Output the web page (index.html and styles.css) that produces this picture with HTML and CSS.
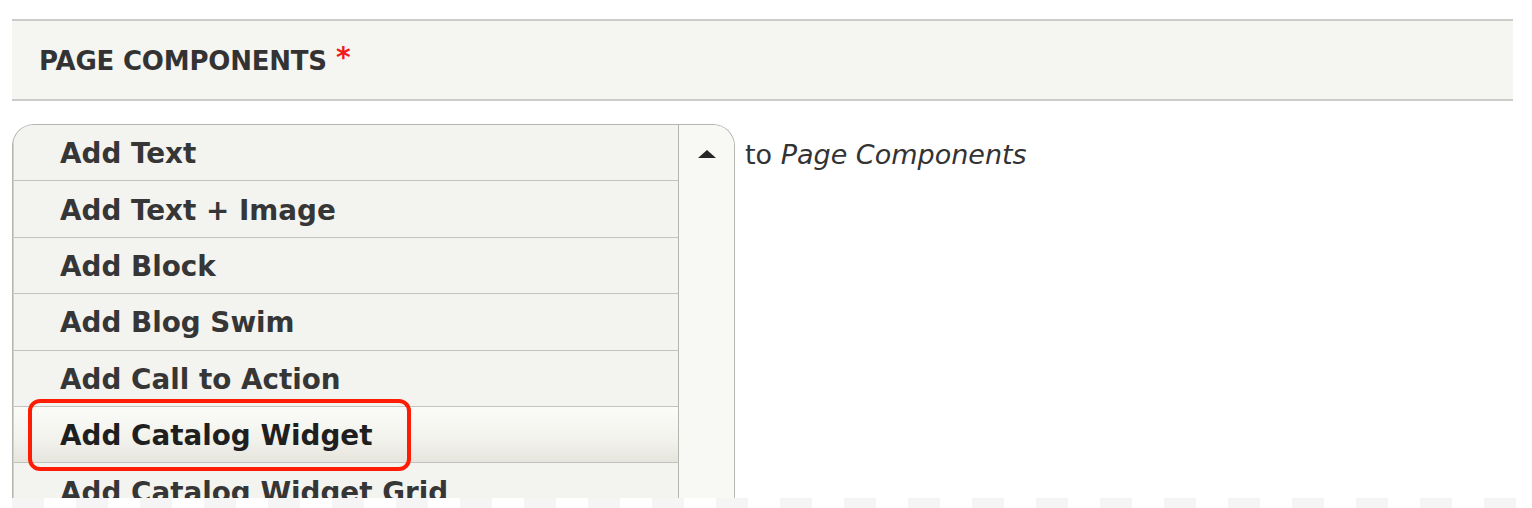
FILE: index.html
```html
<!DOCTYPE html>
<html>
<head>
<meta charset="utf-8">
<link rel="stylesheet" href="styles.css">
</head>
<body>
<div class="page">
  <div class="header">
    <span class="title">PAGE COMPONENTS</span><span class="req">*</span>
  </div>
  <div class="main">
    <div class="listbox">
      <div class="items">
        <div class="item">Add Text</div>
        <div class="item">Add Text + Image</div>
        <div class="item">Add Block</div>
        <div class="item">Add Blog Swim</div>
        <div class="item">Add Call to Action</div>
        <div class="item item-active">Add Catalog Widget<span class="mark"></span></div>
        <div class="item">Add Catalog Widget Grid</div>
      </div>
      <div class="track"><span class="arrow"></span></div>
    </div>
    <div class="to">to <em>Page Components</em></div>
  </div>
</div>
<div class="strip"></div>
</body>
</html>
```
FILE: styles.css
```css
html, body {
  margin: 0;
  padding: 0;
  background: #fff;
}
body {
  font-family: "DejaVu Sans", Verdana, sans-serif;
  color: #333;
}
.page {
  height: 498px;
  overflow: hidden;
  padding-top: 19px;
  box-sizing: border-box;
}
.header {
  margin-left: 12px;
  width: 1501px;
  height: 82px;
  box-sizing: border-box;
  background: #f5f5f1;
  border-top: 2px solid #ccccc8;
  border-bottom: 2px solid #ccccc8;
  display: flex;
  align-items: center;
  padding-left: 27px;
}
.title {
  font-weight: bold;
  font-size: 26px;
  letter-spacing: -0.2px;
  color: #333;
  position: relative;
  top: 1px;
}
.req {
  color: #f21b1b;
  font-weight: bold;
  font-size: 28px;
  margin-left: 9px;
  position: relative;
  top: -3px;
}
.main {
  display: flex;
  align-items: flex-start;
  margin-top: 23px;
  margin-left: 12px;
}
.listbox {
  display: flex;
  width: 721px;
  border: 1px solid #b5b5b1;
  border-bottom: none;
  border-radius: 22px 22px 0 0;
  overflow: hidden;
  height: 400px;
  background: #f3f3ef;
}
.items {
  width: 664px;
  border-right: 1px solid #b5b5b1;
  border-left: 1px solid #d0d0cc;
  flex: none;
}
.item {
  position: relative;
  height: 55.4px;
  border-bottom: 1px solid #c2c2be;
  display: flex;
  align-items: center;
  padding-left: 46px;
  padding-top: 2px;
  box-sizing: border-box;
  height: 56.4px;
  font-size: 27.8px;
  font-weight: bold;
  color: #363636;
  background: #f3f3ef;
}
.item-active {
  color: #1f1f1f;
  background: linear-gradient(#fbfbf8, #f3f3ee 55%, #e6e5dd);
  z-index: 2;
}
.mark {
  position: absolute;
  left: 14px;
  top: -8px;
  width: 375px;
  height: 64px;
  border: 4.5px solid #ff1c05;
  border-radius: 12px;
  z-index: 3;
}
.track {
  flex: 1;
  background: #f8f8f5;
  display: flex;
  justify-content: center;
  padding-top: 25px;
}
.arrow {
  width: 0;
  height: 0;
  border-left: 9px solid transparent;
  border-right: 9px solid transparent;
  border-bottom: 8px solid #262626;
}
.to {
  margin-left: 10px;
  margin-top: 15px;
  font-size: 27px;
  color: #333;
}
.to em {
  font-style: italic;
}
.strip {
  height: 10px;
  background: repeating-linear-gradient(90deg, #fff 0 12px, #f5f5f5 12px 44px, #fff 44px 64px);
}
```
